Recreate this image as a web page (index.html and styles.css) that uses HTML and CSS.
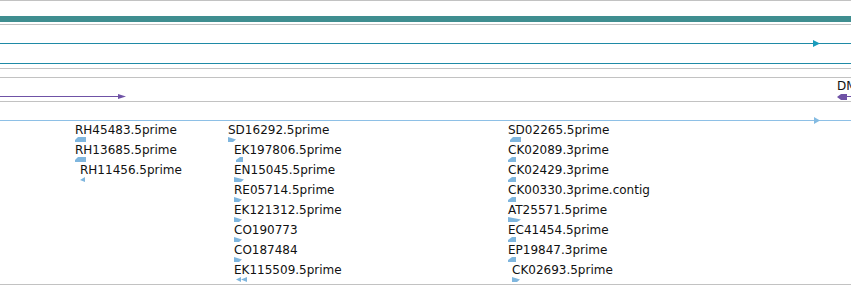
FILE: index.html
```html
<!DOCTYPE html>
<html>
<head>
<meta charset="utf-8">
<link rel="stylesheet" href="styles.css">
</head>
<body>
<div class="browser">
  <div class="rule gray"></div>
  <div class="gap h15"></div>
  <div class="bar-teal"></div>
  <div class="gap h2"></div>
  <div class="rule gray"></div>
  <div class="gap h18"></div>
  <div class="rule teal track">
    <svg class="mark mark-teal" width="7" height="7" viewBox="0 0 7 7"><polygon points="0,0 7,3.5 0,7" fill="#1a9cbc"/></svg>
  </div>
  <div class="gap h19"></div>
  <div class="rule teal"></div>
  <div class="gap h4"></div>
  <div class="rule gray"></div>
  <div class="gap h8"></div>
  <div class="rule gray"></div>
  <div class="dm-lane"><span class="dm-label">DM</span></div>
  <div class="purple-lane">
    <div class="purple-left"></div>
    <svg class="purple-head" width="8" height="5" viewBox="0 0 8 5"><polygon points="0,0 8,2.5 0,5" fill="#6f52a6"/></svg>
    <div class="purple-space"></div>
    <svg class="purple-tail" width="10" height="6" viewBox="0 0 10 6"><polygon points="0,3 4,0 10,0 10,6 4,6" fill="#6f52a6"/></svg>
    <div class="purple-right"></div>
  </div>
  <div class="gap h4"></div>
  <div class="rule gray"></div>
  <div class="gap h18"></div>
  <div class="rule blue track">
    <svg class="mark mark-blue" width="6" height="7" viewBox="0 0 6 7"><polygon points="0,0 6,3.5 0,7" fill="#84bbe2"/></svg>
  </div>
  <div class="features">
    <div class="col col1">
      <div class="feat"><span class="lbl">RH45483.5prime</span><svg width="11" height="5" viewBox="0 0 11 5"><polygon points="0,3 3,0 11,0 11,5 0,5" fill="#7fb6de"/></svg></div>
      <div class="feat"><span class="lbl">RH13685.5prime</span><svg width="11" height="5" viewBox="0 0 11 5"><polygon points="0,3 3,0 11,0 11,5 0,5" fill="#7fb6de"/></svg></div>
      <div class="feat off5"><span class="lbl">RH11456.5prime</span><svg width="5" height="5" viewBox="0 0 5 5"><polygon points="0,3 5,0 5,5" fill="#7fb6de"/></svg></div>
    </div>
    <div class="col col2">
      <div class="feat"><span class="lbl">SD16292.5prime</span><svg width="8" height="5" viewBox="0 0 8 5"><polygon points="0,0 8,2.5 5,5 0,5" fill="#7fb6de"/></svg></div>
      <div class="feat off6"><span class="lbl">EK197806.5prime</span><svg class="ml2" width="7" height="5" viewBox="0 0 7 5"><polygon points="0,3 4,0 7,0 7,5 0,5" fill="#7fb6de"/></svg></div>
      <div class="feat off6"><span class="lbl">EN15045.5prime</span><svg width="10" height="5" viewBox="0 0 10 5"><polygon points="0,0 10,2.5 7,5 0,5" fill="#7fb6de"/></svg></div>
      <div class="feat off6"><span class="lbl">RE05714.5prime</span><svg width="8" height="5" viewBox="0 0 8 5"><polygon points="0,0 8,2.5 5,5 0,5" fill="#7fb6de"/></svg></div>
      <div class="feat off6"><span class="lbl">EK121312.5prime</span><svg width="8" height="5" viewBox="0 0 8 5"><polygon points="0,0 8,2.5 5,5 0,5" fill="#7fb6de"/></svg></div>
      <div class="feat off6"><span class="lbl">CO190773</span><svg width="8" height="5" viewBox="0 0 8 5"><polygon points="0,0 8,2.5 5,5 0,5" fill="#7fb6de"/></svg></div>
      <div class="feat off6"><span class="lbl">CO187484</span><svg width="8" height="5" viewBox="0 0 8 5"><polygon points="0,0 8,2.5 5,5 0,5" fill="#7fb6de"/></svg></div>
      <div class="feat off6"><span class="lbl">EK115509.5prime</span><svg class="ml2" width="11" height="5" viewBox="0 0 11 5"><polygon points="0,2.5 5,0 5,5" fill="#7fb6de"/><polygon points="5,2.5 11,0 11,5" fill="#7fb6de"/></svg></div>
    </div>
    <div class="col col3">
      <div class="feat"><span class="lbl">SD02265.5prime</span><svg class="ml2" width="11" height="5" viewBox="0 0 11 5"><polygon points="0,3 3,0 11,0 11,5 0,5" fill="#7fb6de"/></svg></div>
      <div class="feat"><span class="lbl">CK02089.3prime</span><svg width="8" height="5" viewBox="0 0 8 5"><polygon points="0,3 4,0 8,0 8,5 0,5" fill="#7fb6de"/></svg></div>
      <div class="feat"><span class="lbl">CK02429.3prime</span><svg width="8" height="5" viewBox="0 0 8 5"><polygon points="0,3 4,0 8,0 8,5 0,5" fill="#7fb6de"/></svg></div>
      <div class="feat"><span class="lbl">CK00330.3prime.contig</span><svg width="8" height="5" viewBox="0 0 8 5"><polygon points="0,3 4,0 8,0 8,5 0,5" fill="#7fb6de"/></svg></div>
      <div class="feat"><span class="lbl">AT25571.5prime</span><svg width="13" height="5" viewBox="0 0 13 5"><polygon points="0,0 13,2.5 9,5 0,5" fill="#7fb6de"/></svg></div>
      <div class="feat"><span class="lbl">EC41454.5prime</span><svg width="8" height="5" viewBox="0 0 8 5"><polygon points="0,3 4,0 8,0 8,5 0,5" fill="#7fb6de"/></svg></div>
      <div class="feat"><span class="lbl">EP19847.3prime</span><svg width="8" height="5" viewBox="0 0 8 5"><polygon points="0,3 4,0 8,0 8,5 0,5" fill="#7fb6de"/></svg></div>
      <div class="feat off4"><span class="lbl">CK02693.5prime</span><svg width="8" height="5" viewBox="0 0 8 5"><polygon points="0,0 8,2.5 5,5 0,5" fill="#7fb6de"/></svg></div>
    </div>
  </div>
  <div class="rule gray"></div>
</div>
</body>
</html>
```

FILE: styles.css
```css
html, body {
  margin: 0;
  padding: 0;
  background: #ffffff;
}
.browser {
  width: 851px;
  height: 285px;
  overflow: hidden;
  display: flex;
  flex-direction: column;
  font-family: "DejaVu Sans", "Liberation Sans", sans-serif;
  font-size: 12px;
  color: #111;
}
.rule { height: 1px; flex: none; }
.gray { background: #c2c2c2; }
.teal { background: #1f8aa6; }
.blue { background: #8ec0e6; }
.gap { flex: none; }
.h2 { height: 2px; }
.h4 { height: 4px; }
.h8 { height: 8px; }
.h15 { height: 15px; }
.h18 { height: 18px; }
.h19 { height: 19px; }
.bar-teal {
  height: 6px;
  flex: none;
  background: #3f8e90;
}
.track { position: relative; }
.mark { position: absolute; top: -3px; display: block; }
.mark-teal { left: 813px; }
.mark-blue { left: 814px; }

.dm-lane {
  height: 18px;
  flex: none;
  position: relative;
  display: flex;
  justify-content: flex-end;
}
.dm-label {
  width: 14px;
  overflow: hidden;
  white-space: nowrap;
  line-height: 13px;
  padding-top: 2px;
  color: #111;
}
.purple-lane {
  height: 1px;
  flex: none;
  display: flex;
  align-items: center;
}
.purple-left { width: 118px; height: 1px; background: #6f52a6; flex: none; }
.purple-head { flex: none; display: block; }
.purple-space { flex: 1; }
.purple-tail { flex: none; display: block; }
.purple-right { width: 4px; height: 1px; background: #6f52a6; flex: none; }

.features {
  height: 163px;
  flex: none;
  display: flex;
  padding: 3px 0 0 75px;
  box-sizing: border-box;
}
.col { display: flex; flex-direction: column; flex: none; }
.col1 { width: 153px; }
.col2 { width: 280px; }
.col3 { width: 200px; }
.feat {
  display: flex;
  flex-direction: column;
  align-items: flex-start;
  height: 20px;
}
.feat svg { display: block; flex: none; }
.lbl {
  line-height: 13px;
  height: 13px;
  white-space: nowrap;
}
.off4 { padding-left: 4px; }
.off5 { padding-left: 5px; }
.off6 { padding-left: 6px; }
.ml2 { margin-left: 2px; }
```
